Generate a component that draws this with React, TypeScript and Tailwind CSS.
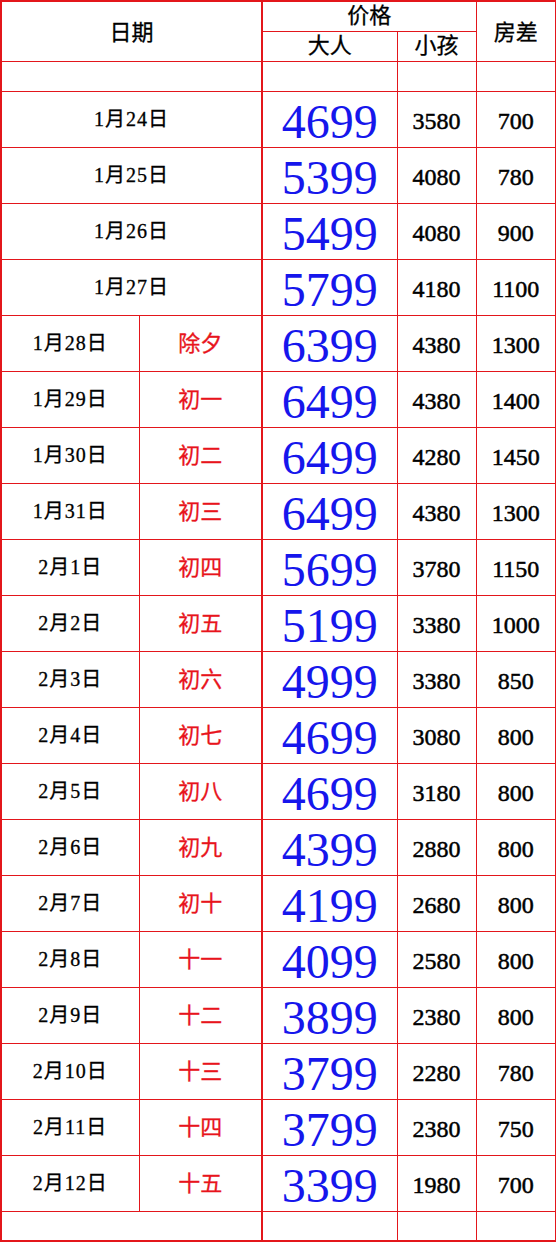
const rows = [
  { date: "1月24日", lunar: "", adult: "4699", child: "3580", room: "700" },
  { date: "1月25日", lunar: "", adult: "5399", child: "4080", room: "780" },
  { date: "1月26日", lunar: "", adult: "5499", child: "4080", room: "900" },
  { date: "1月27日", lunar: "", adult: "5799", child: "4180", room: "1100" },
  { date: "1月28日", lunar: "除夕", adult: "6399", child: "4380", room: "1300" },
  { date: "1月29日", lunar: "初一", adult: "6499", child: "4380", room: "1400" },
  { date: "1月30日", lunar: "初二", adult: "6499", child: "4280", room: "1450" },
  { date: "1月31日", lunar: "初三", adult: "6499", child: "4380", room: "1300" },
  { date: "2月1日", lunar: "初四", adult: "5699", child: "3780", room: "1150" },
  { date: "2月2日", lunar: "初五", adult: "5199", child: "3380", room: "1000" },
  { date: "2月3日", lunar: "初六", adult: "4999", child: "3380", room: "850" },
  { date: "2月4日", lunar: "初七", adult: "4699", child: "3080", room: "800" },
  { date: "2月5日", lunar: "初八", adult: "4699", child: "3180", room: "800" },
  { date: "2月6日", lunar: "初九", adult: "4399", child: "2880", room: "800" },
  { date: "2月7日", lunar: "初十", adult: "4199", child: "2680", room: "800" },
  { date: "2月8日", lunar: "十一", adult: "4099", child: "2580", room: "800" },
  { date: "2月9日", lunar: "十二", adult: "3899", child: "2380", room: "800" },
  { date: "2月10日", lunar: "十三", adult: "3799", child: "2280", room: "780" },
  { date: "2月11日", lunar: "十四", adult: "3799", child: "2380", room: "750" },
  { date: "2月12日", lunar: "十五", adult: "3399", child: "1980", room: "700" },
];

const cell = "border border-[#e3161b] p-0 text-center align-middle";
const thick = "border-l-2 border-l-[#e3161b]";
const cjk = "font-['Liberation_Serif','Noto_Sans_CJK_SC',serif]";
// heavier strokes, like the printed sheet
const heavy = "[-webkit-text-stroke:0.5px_currentColor]";
const semi = "[-webkit-text-stroke:0.3px_currentColor]";

export default function App() {
  return (
    <div className="w-[556px] bg-white">
      <table className={`w-[555px] table-fixed border-collapse border-2 border-[#e3161b] text-black ${cjk}`}>
        <colgroup>
          <col className="w-[138px]" />
          <col className="w-[123px]" />
          <col className="w-[135px]" />
          <col className="w-[79px]" />
          <col className="w-[80px]" />
        </colgroup>
        <tbody>
          <tr className="h-[30px]">
            <td colSpan={2} rowSpan={2} className={`${cell} ${semi} pt-[3px] text-[22px]`}>日期</td>
            <td colSpan={2} className={`${cell} ${thick} ${semi} text-[22px] leading-none`}>价格</td>
            <td rowSpan={2} className={`${cell} ${semi} pt-[3px] text-[22px]`}>房差</td>
          </tr>
          <tr className="h-[30px]">
            <td className={`${cell} ${thick} ${semi} align-bottom text-[22px] leading-none`}>大人</td>
            <td className={`${cell} ${semi} align-bottom text-[22px] leading-none`}>小孩</td>
          </tr>
          <tr className="h-[30px]">
            <td colSpan={2} className={cell}></td>
            <td className={`${cell} ${thick}`}></td>
            <td className={cell}></td>
            <td className={cell}></td>
          </tr>
          {rows.map((r) => (
            <tr key={r.date} className="h-[56px]">
              {r.lunar ? (
                <>
                  <td className={`${cell} ${semi} text-[20px] tracking-[1px]`}>{r.date}</td>
                  <td className={`${cell} ${semi} text-[22px] text-[#e8141c]`}>{r.lunar}</td>
                </>
              ) : (
                <td colSpan={2} className={`${cell} ${semi} text-[20px] tracking-[1px]`}>{r.date}</td>
              )}
              <td className={`${cell} ${thick} pt-[6px] text-[48px] leading-none text-[#1616ec]`}>{r.adult}</td>
              <td className={`${cell} ${heavy} pt-[3px] text-[24px]`}>{r.child}</td>
              <td className={`${cell} ${heavy} pt-[3px] text-[24px]`}>{r.room}</td>
            </tr>
          ))}
          <tr className="h-[30px]">
            <td colSpan={2} className={cell}></td>
            <td className={`${cell} ${thick}`}></td>
            <td className={cell}></td>
            <td className={cell}></td>
          </tr>
        </tbody>
      </table>
    </div>
  );
}
